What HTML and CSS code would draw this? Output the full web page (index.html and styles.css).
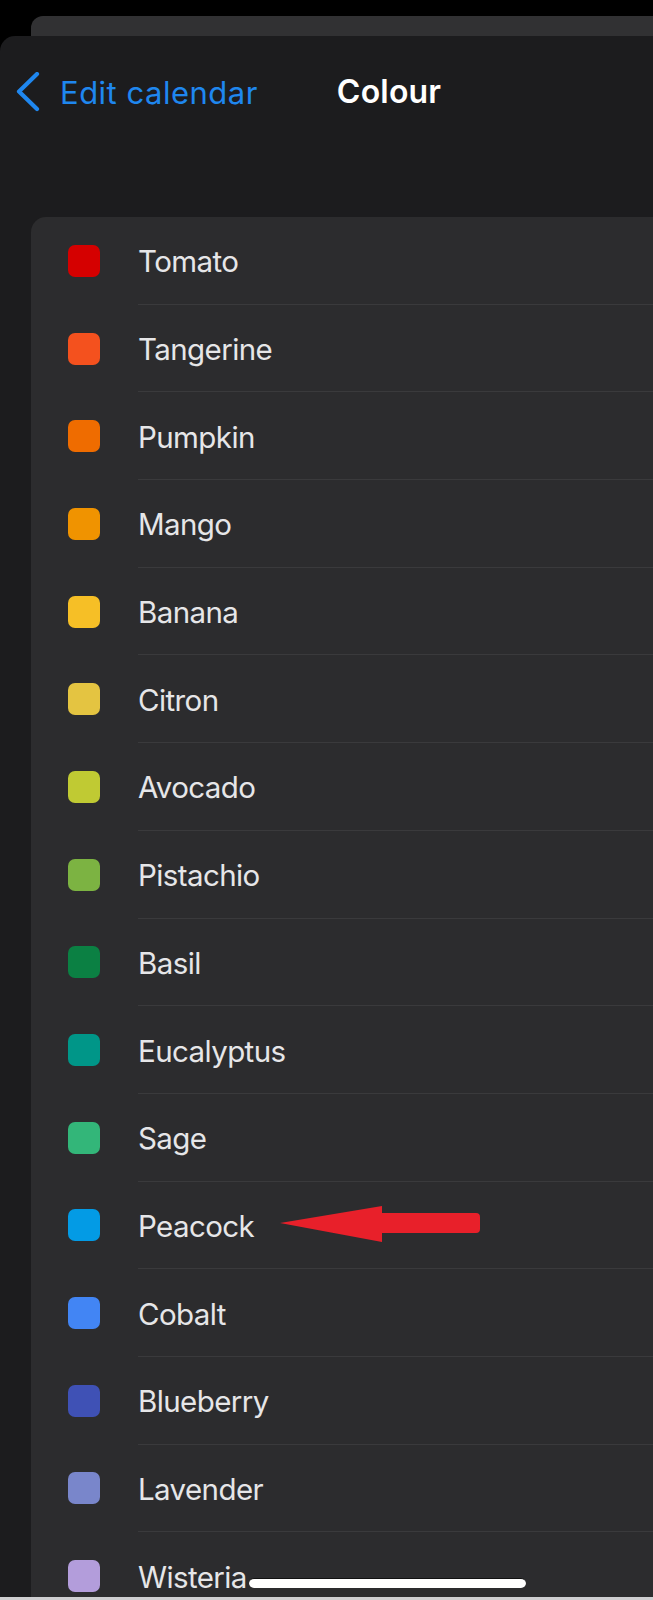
FILE: index.html
```html
<!DOCTYPE html>
<html lang="en">
<head>
  <meta charset="UTF-8">
  <title>Colour</title>
  <link rel="stylesheet" href="styles.css">
</head>
<body>

<div class="back-card"></div>

<div class="sheet">
  <header class="nav">
    <a class="back" href="#">
      <svg class="chevron" width="26" height="40" viewBox="0 0 26 40">
        <path d="M22 2 L4 19.5 L22 37" fill="none" stroke="currentColor" stroke-width="4.2" stroke-linecap="round" stroke-linejoin="round"/>
      </svg>
      <span>Edit calendar</span>
    </a>
    <h1>Colour</h1>
  </header>

  <ul class="colours">
    <li><span class="swatch" style="background:#d50000"></span><span class="label">Tomato</span></li>
    <li><span class="swatch" style="background:#f4511e"></span><span class="label">Tangerine</span></li>
    <li><span class="swatch" style="background:#ef6c00"></span><span class="label">Pumpkin</span></li>
    <li><span class="swatch" style="background:#f09300"></span><span class="label">Mango</span></li>
    <li><span class="swatch" style="background:#f6bf26"></span><span class="label">Banana</span></li>
    <li><span class="swatch" style="background:#e4c441"></span><span class="label">Citron</span></li>
    <li><span class="swatch" style="background:#c0ca33"></span><span class="label">Avocado</span></li>
    <li><span class="swatch" style="background:#7cb342"></span><span class="label">Pistachio</span></li>
    <li><span class="swatch" style="background:#0b8043"></span><span class="label">Basil</span></li>
    <li><span class="swatch" style="background:#009688"></span><span class="label">Eucalyptus</span></li>
    <li><span class="swatch" style="background:#33b679"></span><span class="label">Sage</span></li>
    <li class="marked"><span class="swatch" style="background:#039be5"></span><span class="label">Peacock</span>
      <svg class="arrow" width="202" height="40" viewBox="0 0 202 40">
        <path d="M0 17 L102 0 L102 7 L196 7 Q200 7 200 11 L200 23 Q200 27 196 27 L102 27 L102 36 Z" fill="#e8202a"/>
      </svg>
    </li>
    <li><span class="swatch" style="background:#4285f4"></span><span class="label">Cobalt</span></li>
    <li><span class="swatch" style="background:#3f51b5"></span><span class="label">Blueberry</span></li>
    <li><span class="swatch" style="background:#7986cb"></span><span class="label">Lavender</span></li>
    <li><span class="swatch" style="background:#b39ddb"></span><span class="label">Wisteria</span></li>
  </ul>
</div>

<div class="home-indicator"></div>
<div class="bottom-edge"></div>

</body>
</html>
```

FILE: styles.css
```css
body { margin: 0; background: #000; font-family: Inter, "Noto Sans", sans-serif; overflow: hidden; }
.back-card { margin: 16px 0 0 31px; height: 20px; background: #313133; border-top-left-radius: 12px; }
.sheet { background: #1c1c1e; border-top-left-radius: 15px; min-height: 1600px; }
.nav { height: 181px; display: flex; align-items: flex-start; padding-top: 36px; box-sizing: border-box; }
.back { display: flex; align-items: center; gap: 19px; color: #1f87ef; text-decoration: none; font-size: 31px; letter-spacing: 0.5px; padding-left: 15px; height: 40px; }
.chevron { display: block; }
.nav h1 { margin: 0 0 0 79px; font-size: 32px; font-weight: 600; color: #fff; line-height: 40px; letter-spacing: 0.2px; }
.colours { list-style: none; margin: 0 0 0 31px; padding: 0; background: #2c2c2e; border-top-left-radius: 15px; }
.colours li { display: flex; align-items: center; height: 87.7px; position: relative; }
.swatch { width: 32px; height: 32px; border-radius: 7px; margin: 0 38px 0 37px; flex: none; }
.label { flex: 1; align-self: stretch; display: flex; align-items: center; padding-top: 2px; box-sizing: border-box; color: #e6e6e8; font-size: 29.5px; letter-spacing: -0.6px; border-bottom: 1px solid #3a3a3c; }
.colours li:last-child .label { border-bottom: none; }
.arrow { position: absolute; left: 249px; top: 24px; }
.home-indicator { position: fixed; left: 249px; top: 1578px; width: 277px; height: 10px; background: #fff; border-radius: 5px; border-top: 1px solid #111; box-sizing: border-box; }
.bottom-edge { position: fixed; left: 0; right: 0; top: 1597px; height: 3px; background: #cfcfd1; }
```
